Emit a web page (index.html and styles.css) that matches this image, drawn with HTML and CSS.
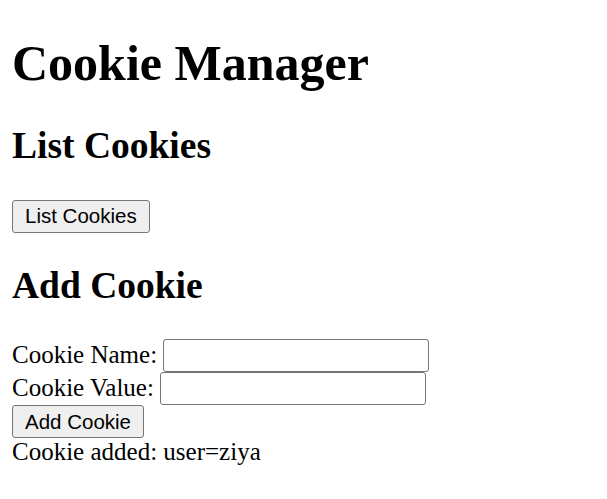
FILE: index.html
```html
<!DOCTYPE html>
<html lang="en">
<head>
<meta charset="utf-8">
<title>Cookie Manager</title>
<link rel="stylesheet" href="styles.css">
</head>
<body>
<h1 class="title">Cookie Manager</h1>
<h2 class="section">List Cookies</h2>
<div class="actions"><button class="btn" type="button">List Cookies</button></div>
<h2 class="section">Add Cookie</h2>
<form class="cookie-form">
  <div class="row">Cookie Name: <input class="field" type="text"></div>
  <div class="row">Cookie Value: <input class="field" type="text"></div>
  <div class="row"><button class="btn" type="button">Add Cookie</button></div>
  <div class="row status">Cookie added: user=ziya</div>
</form>
</body>
</html>
```
FILE: styles.css
```css
html, body {
  background: #fff;
}
body {
  margin: 0;
  padding: 0 12px;
  font-family: "Liberation Serif", "Times New Roman", serif;
  font-size: 25px;
  color: #000;
}
.title {
  font-size: 50px;
  font-weight: bold;
  margin: 34px 0 32px;
}
.section {
  font-size: 37.5px;
  font-weight: bold;
  margin: 31px 0 32.5px;
}
.actions {
  margin: 0;
}
.cookie-form {
  margin: 31px 0 0;
}
.btn {
  font-family: "Liberation Sans", Arial, sans-serif;
  font-size: 20.5px;
  color: #000;
  background: #efefef;
  border: 1px solid #767676;
  border-radius: 3px;
  padding: 3.5px 12px;
  margin: 0;
}
.field {
  font-family: "Liberation Sans", Arial, sans-serif;
  font-size: 20.5px;
  width: 266px;
  box-sizing: border-box;
  padding: 3.5px 3px;
  border: 1px solid #767676;
  border-radius: 3px;
  margin: 0;
  background: #fff;
}
```
